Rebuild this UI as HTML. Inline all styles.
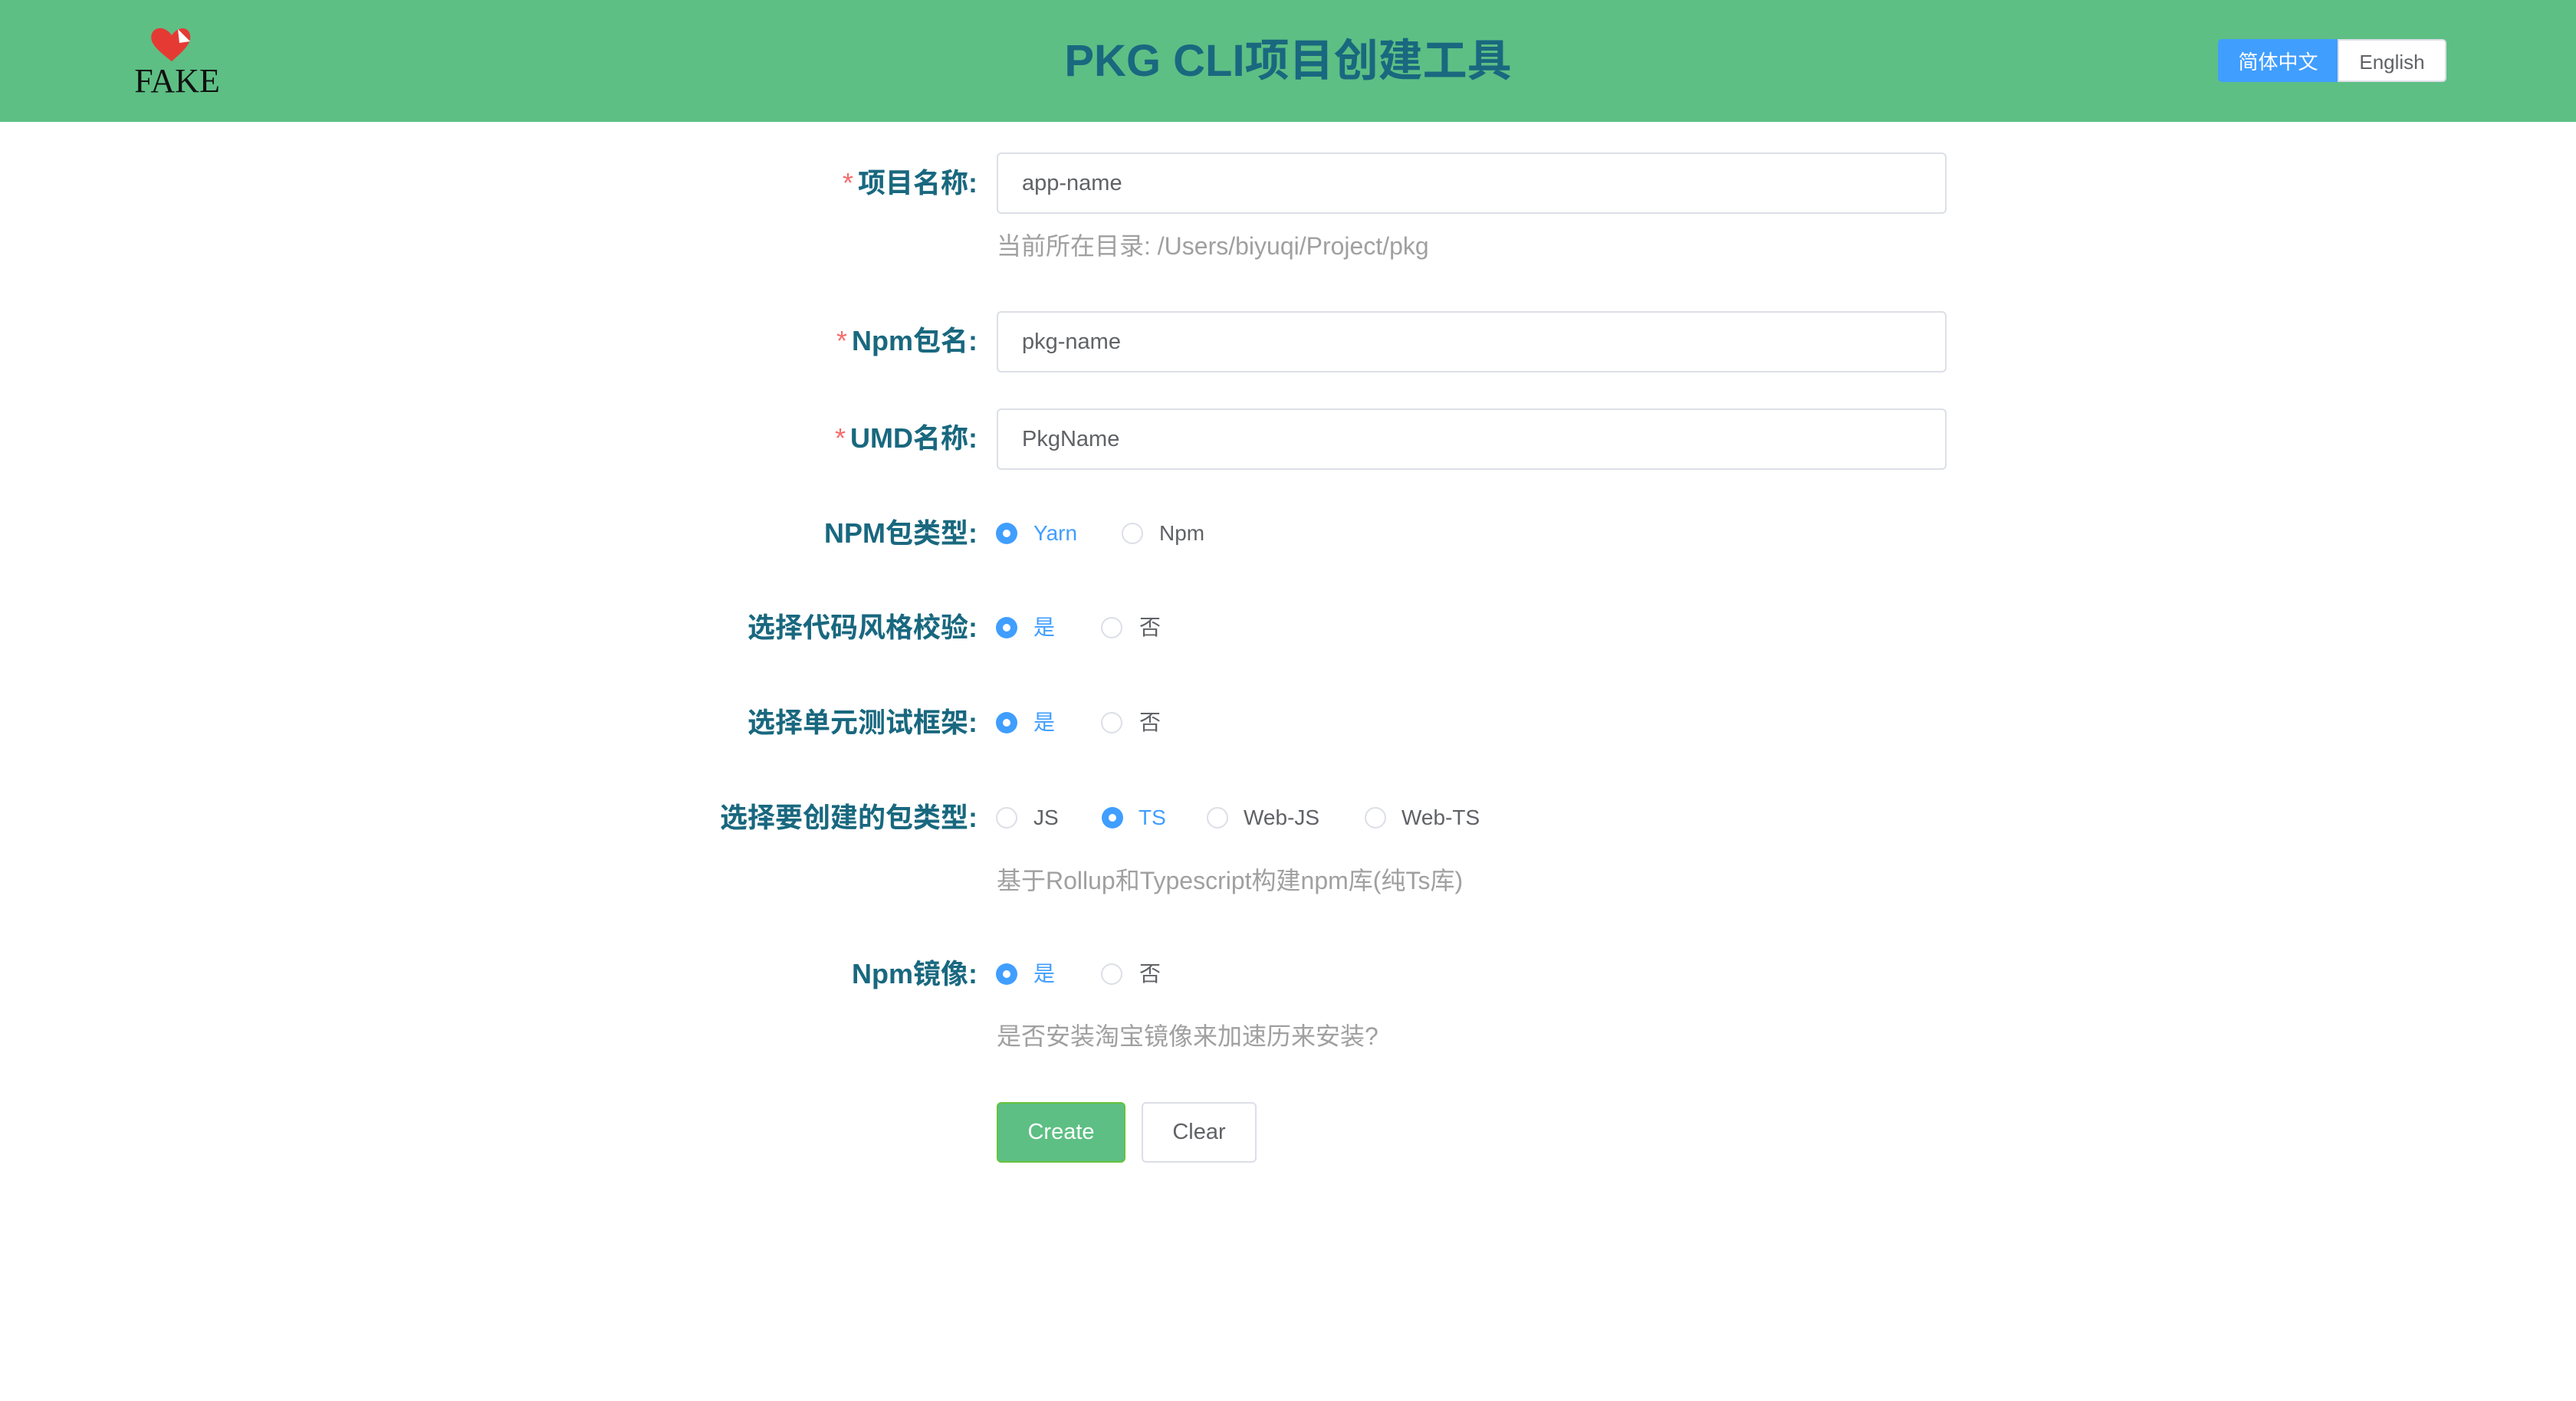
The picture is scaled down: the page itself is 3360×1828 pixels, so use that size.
<!DOCTYPE html>
<html><head><meta charset="utf-8"><style>
*{margin:0;padding:0;box-sizing:border-box}
body{width:3360px;height:1828px;background:#fff;position:relative;font-family:"Liberation Sans","Noto Sans CJK SC",sans-serif;overflow:hidden}
.hdr{position:absolute;left:0;top:0;width:3360px;height:159px;background:#5dbf84}
.title{position:absolute;left:0;width:3360px;top:40px;text-align:center;font-size:58px;font-weight:bold;color:#19687f;line-height:80px}
.lb{position:absolute;height:56px;line-height:56px;border:2px solid #fff;font-size:26px;text-align:center;top:51px}
.lab{position:absolute;right:2085px;font-size:36px;font-weight:bold;color:#19687f;line-height:50px;white-space:nowrap}
.lab i{color:#f56c6c;font-style:normal;font-weight:normal;margin-right:6px}
.inp{position:absolute;left:1300px;width:1239px;height:80px;border:2px solid #dcdfe6;border-radius:6px;font-size:29px;color:#606266;padding-left:31px;line-height:76px}
.hint{position:absolute;left:1300px;font-size:32px;color:#a0a0a0;line-height:44px;white-space:nowrap}
.r{position:absolute;width:28px;height:28px;border:2px solid #dcdfe6;border-radius:50%}
.r.on{border:none;background:#409eff}
.r.on:after{content:"";position:absolute;left:9px;top:9px;width:10px;height:10px;border-radius:50%;background:#fff}
.t{position:absolute;font-size:28px;color:#606266;line-height:40px;white-space:nowrap}
.t.on{color:#409eff}
.btn{position:absolute;top:1438px;height:79px;border-radius:6px;font-size:29px;text-align:center;line-height:75px}
</style></head><body>
<div class="hdr">
<svg style="position:absolute;left:176px;top:26px" width="110" height="100" viewBox="0 0 110 100">
<path d="M48 54 C30 40 18 30 22 18 C26 8 40 8 48 20 C56 8 70 8 72 20 C74 30 64 40 48 54Z" fill="#e53a33"/>
<path d="M56 12 L58 30 L72 28 Z" fill="#fff"/>
<text x="55" y="94" text-anchor="middle" font-family="Liberation Serif,serif" font-size="44" fill="#111">FAKE</text>
</svg>
<div class="title">PKG CLI项目创建工具</div>
<div class="lb" style="left:2893px;width:157px;background:#409eff;color:#fff;border-color:#409eff;border-radius:5px 0 0 5px">简体中文</div>
<div class="lb" style="left:3049px;width:142px;background:#fff;color:#606266;border-color:#dcdfe6;border-radius:0 5px 5px 0">English</div>
</div>

<div class="lab" style="top:214px"><i>*</i>项目名称:</div>
<div class="inp" style="top:199px">app-name</div>
<div class="hint" style="top:299px">当前所在目录: /Users/biyuqi/Project/pkg</div>

<div class="lab" style="top:420px"><i>*</i>Npm包名:</div>
<div class="inp" style="top:406px">pkg-name</div>

<div class="lab" style="top:547px"><i>*</i>UMD名称:</div>
<div class="inp" style="top:533px">PkgName</div>

<div class="lab" style="top:671px">NPM包类型:</div>
<div class="r on" style="left:1299px;top:682px"></div><div class="t on" style="left:1348px;top:676px">Yarn</div>
<div class="r" style="left:1463px;top:682px"></div><div class="t" style="left:1512px;top:676px">Npm</div>

<div class="lab" style="top:794px">选择代码风格校验:</div>
<div class="r on" style="left:1299px;top:805px"></div><div class="t on" style="left:1348px;top:799px">是</div>
<div class="r" style="left:1436px;top:805px"></div><div class="t" style="left:1486px;top:799px">否</div>

<div class="lab" style="top:918px">选择单元测试框架:</div>
<div class="r on" style="left:1299px;top:929px"></div><div class="t on" style="left:1348px;top:923px">是</div>
<div class="r" style="left:1436px;top:929px"></div><div class="t" style="left:1486px;top:923px">否</div>

<div class="lab" style="top:1042px">选择要创建的包类型:</div>
<div class="r" style="left:1299px;top:1053px"></div><div class="t" style="left:1348px;top:1047px">JS</div>
<div class="r on" style="left:1437px;top:1053px"></div><div class="t on" style="left:1485px;top:1047px">TS</div>
<div class="r" style="left:1574px;top:1053px"></div><div class="t" style="left:1622px;top:1047px">Web-JS</div>
<div class="r" style="left:1780px;top:1053px"></div><div class="t" style="left:1828px;top:1047px">Web-TS</div>
<div class="hint" style="top:1127px">基于Rollup和Typescript构建npm库(纯Ts库)</div>

<div class="lab" style="top:1246px">Npm镜像:</div>
<div class="r on" style="left:1299px;top:1257px"></div><div class="t on" style="left:1348px;top:1251px">是</div>
<div class="r" style="left:1436px;top:1257px"></div><div class="t" style="left:1486px;top:1251px">否</div>
<div class="hint" style="top:1330px">是否安装淘宝镜像来加速历来安装?</div>

<div class="btn" style="left:1300px;width:168px;background:#5dbf84;color:#fff;border:2px solid #67c23a">Create</div>
<div class="btn" style="left:1489px;width:150px;background:#fff;color:#606266;border:2px solid #dcdfe6">Clear</div>
</body></html>
